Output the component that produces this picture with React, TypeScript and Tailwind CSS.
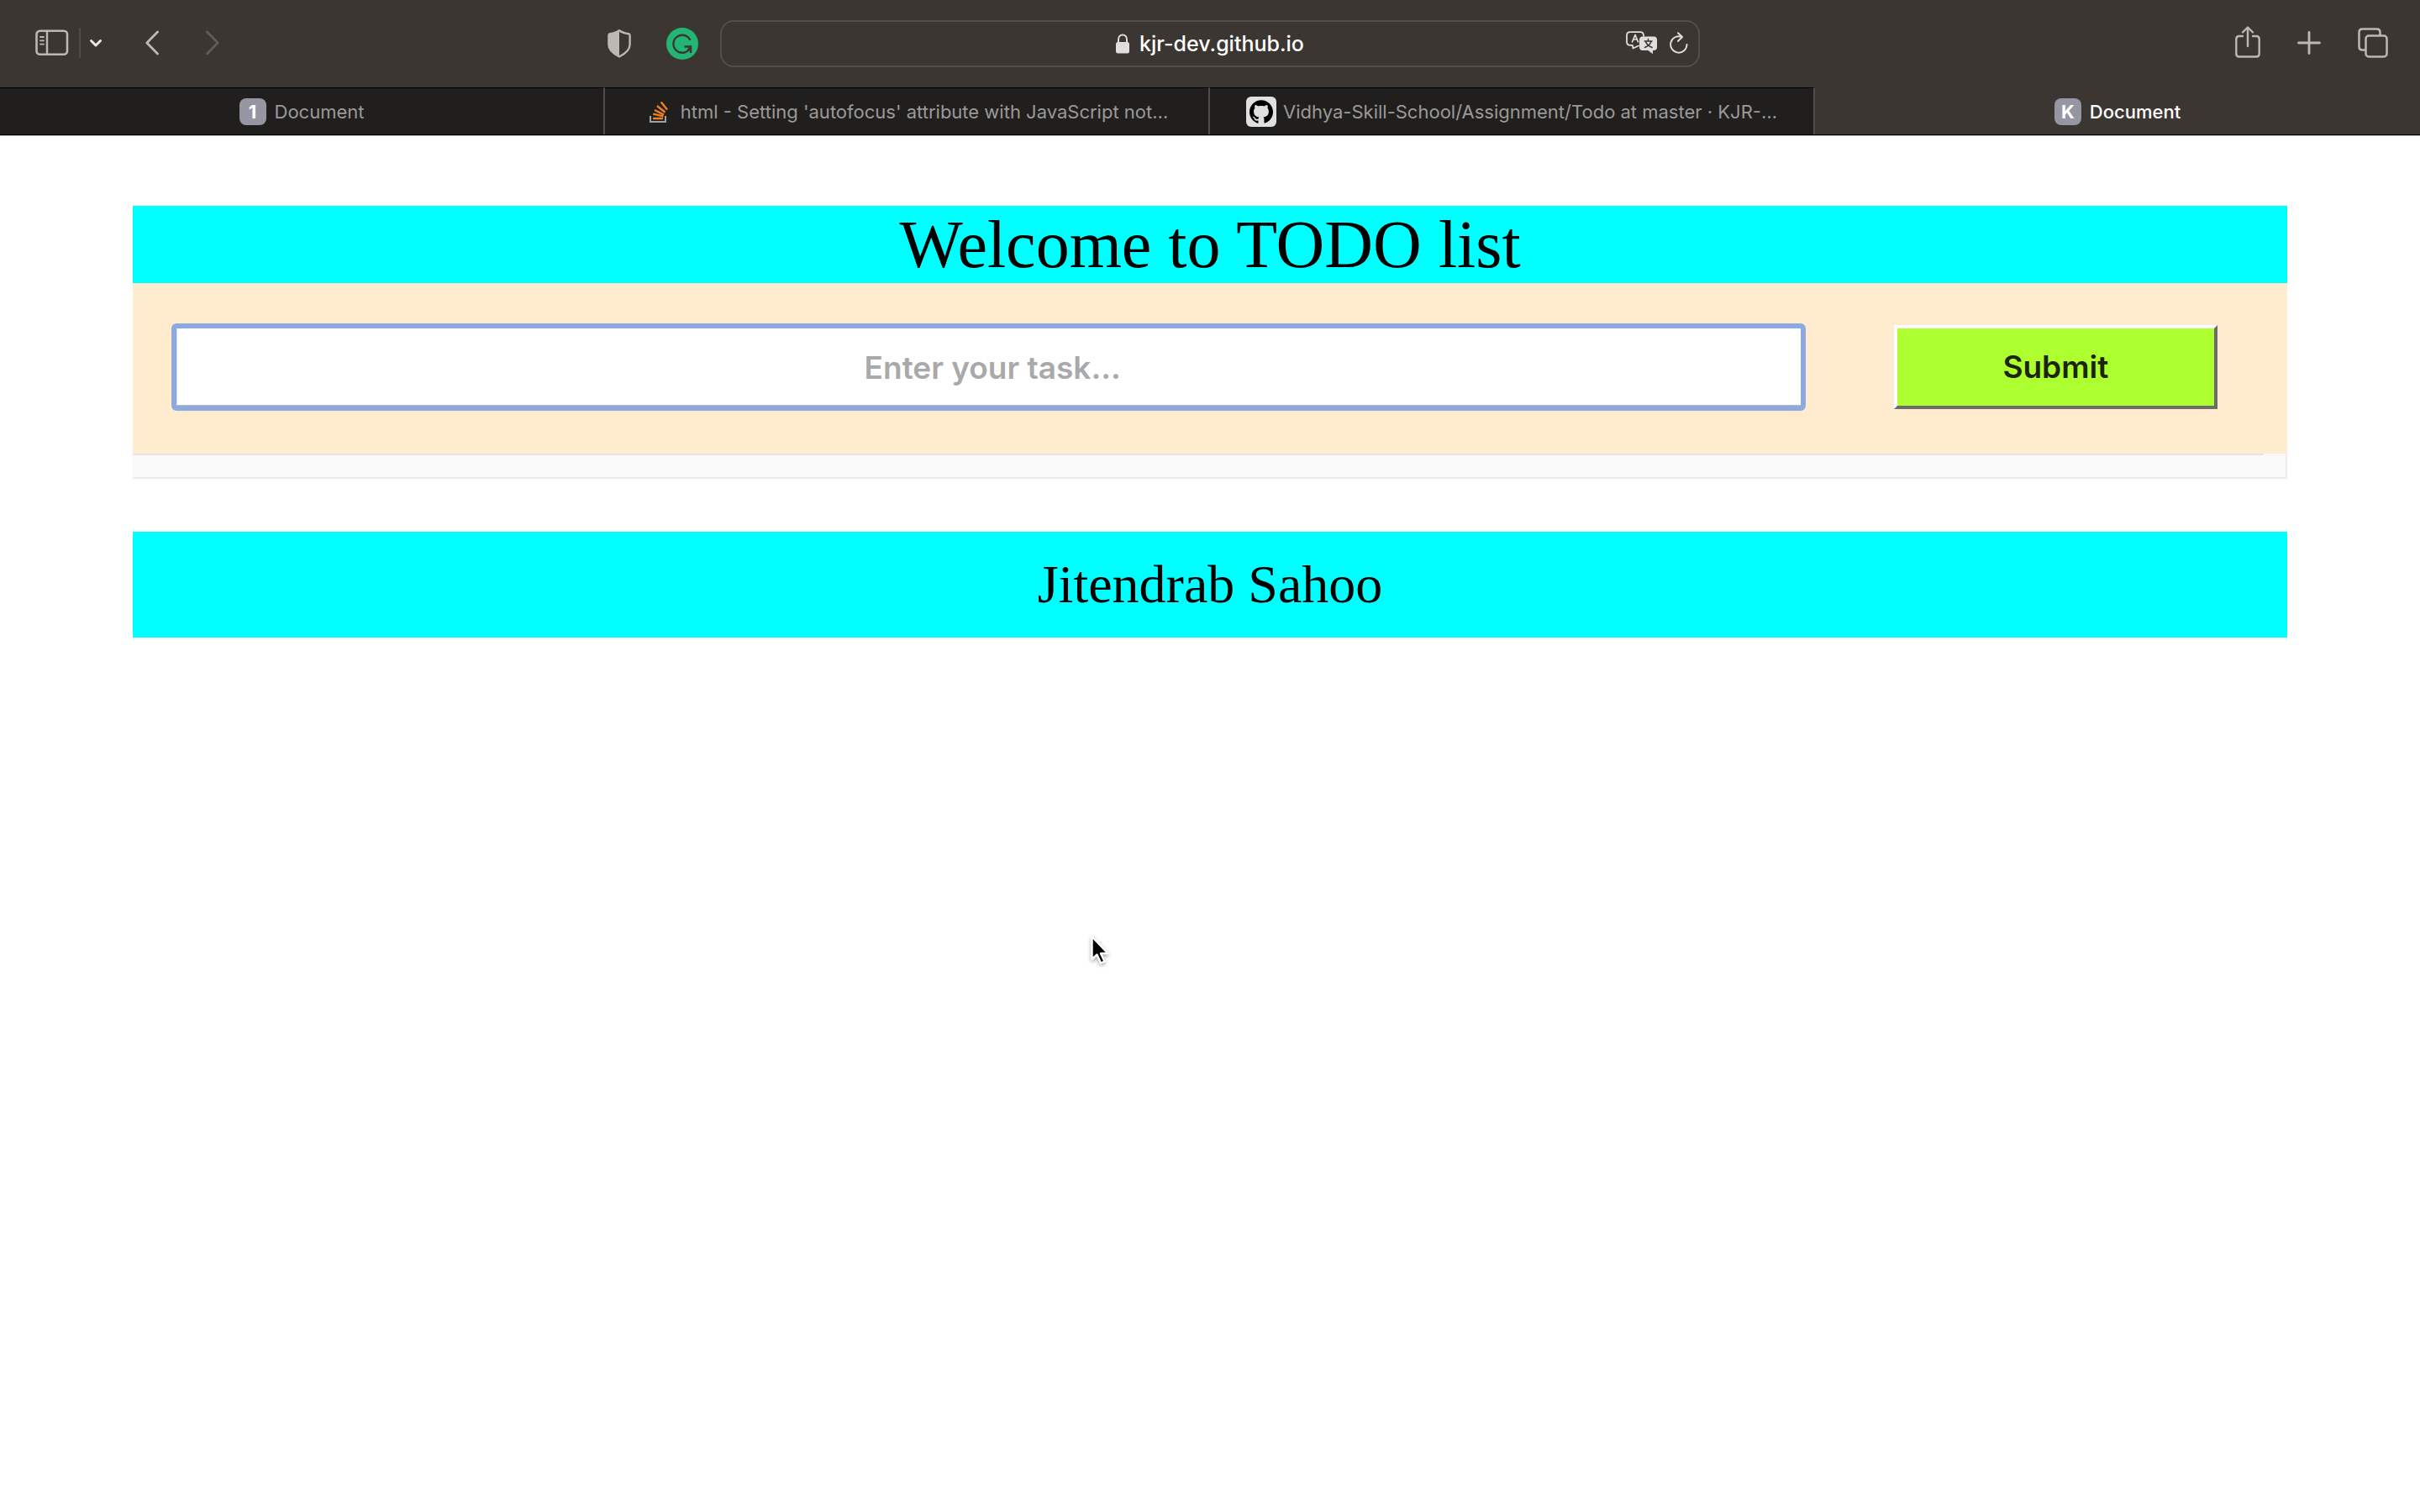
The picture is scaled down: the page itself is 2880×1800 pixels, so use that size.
import { useState } from "react";
import type { ReactNode } from "react";
import { SiGithub } from "react-icons/si";

function SidebarIcon() {
  return (
    <svg width="40" height="32" viewBox="0 0 40 32" fill="none" stroke="#bdb8b5" strokeLinecap="round">
      <rect x="1.500" y="1.800" width="36.500" height="28" rx="4" strokeWidth="2.600" />
      <path d="M14 2v28" strokeWidth="2.400" />
      <path d="M6 9h4M6 13.300h4M6 17.600h4" strokeWidth="1.800" />
    </svg>
  );
}

function ShieldIcon() {
  return (
    <svg width="28" height="34" viewBox="0 0 28 34" fill="none">
      <path
        d="M14 1.300C17 3.600 21.500 4.800 25 5.300Q26.600 5.600 26.600 7.200V18C26.600 25 20 29.500 14 32.500C8 29.500 1.400 25 1.400 18V7.200Q1.400 5.600 3 5.300C6.500 4.800 11 3.600 14 1.300Z"
        stroke="#bdb8b5"
        strokeWidth="2.400"
        strokeLinejoin="round"
      />
      <path d="M14 1.300C11 3.600 6.500 4.800 3 5.300Q1.400 5.600 1.400 7.200V18C1.400 25 8 29.500 14 32.500Z" fill="#bdb8b5" />
    </svg>
  );
}

function GrammarIcon() {
  return (
    <svg width="38" height="38" viewBox="0 0 38 38" fill="none">
      <circle cx="19" cy="19" r="19" fill="#23b574" />
      <path d="M28 14A10.500 10.500 0 1 0 27 26" stroke="#3c3633" strokeWidth="2.400" strokeLinecap="round" />
      <path d="M21.500 22.500H29V30" stroke="#3c3633" strokeWidth="2.600" />
      <path d="M28.500 23L25.500 27" stroke="#3c3633" strokeWidth="2.400" />
    </svg>
  );
}

function LockIcon() {
  return (
    <svg width="16" height="24" viewBox="0 0 16 24" fill="none">
      <path d="M3 11V7C3 3.500 5.200 1.500 8 1.500S13 3.500 13 7V11" stroke="#dfdedd" strokeWidth="2" />
      <rect x="0" y="10" width="16" height="13.500" rx="2.500" fill="#dfdedd" />
    </svg>
  );
}

function TranslateIcon() {
  return (
    <svg width="38" height="28" viewBox="0 0 38 28" fill="none" strokeLinecap="round" strokeLinejoin="round">
      <path
        d="M15 17.500L8.500 20.500L7.800 16.800H5Q1 16.800 1 12.800V5Q1 1.200 5 1.200H17Q21 1.200 21 5V6"
        stroke="#dfdedd"
        strokeWidth="1.800"
      />
      <path d="M7.500 12.800L11 4.500L14.500 12.800M8.800 10H13.200" stroke="#dfdedd" strokeWidth="1.700" />
      <rect x="16" y="6.500" width="21" height="16.500" rx="4" fill="#dfdedd" />
      <path d="M25 22L32 27.300V22Z" fill="#dfdedd" />
      <path
        d="M26.500 9.500V11.500M22.200 12H31M30 12.500C29 15.500 26 18 22.500 19.500M23.500 12.500C24.500 15.500 27 18 31 19.500"
        stroke="#3c3633"
        strokeWidth="1.500"
      />
    </svg>
  );
}

function ReloadIcon() {
  return (
    <svg width="22" height="26" viewBox="0 0 22 26" fill="none" stroke="#dfdedd" strokeWidth="1.900" strokeLinecap="round" strokeLinejoin="round">
      <path d="M20.500 15A9.700 9.700 0 1 1 14.500 6" />
      <path d="M10 1.200L15 6L10 11" />
    </svg>
  );
}

function StackIcon() {
  return (
    <svg width="32" height="32" viewBox="0 0 32 32" fill="none">
      <path d="M6 21V28H24V21" stroke="#9aa2aa" strokeWidth="2" />
      <path
        d="M9 24H21M9.300 18.700L21.500 21.400M11 14L22 19.500M14 9L23.500 16.800M18.700 4.500L26 13.500"
        stroke="#f0801f"
        strokeWidth="2.400"
      />
    </svg>
  );
}

function LetterBadge({ letter }: { letter: string }) {
  return (
    <span className="flex size-8 shrink-0 items-center justify-center rounded-lg bg-[#9696a3] text-[22px] font-bold text-white">
      {letter}
    </span>
  );
}

function GithubBadge() {
  return (
    <span className="flex size-9 shrink-0 items-center justify-center rounded-md bg-[#e0e0e0]">
      <SiGithub className="size-7 text-black" />
    </span>
  );
}

type Tab = { title: string; icon: ReactNode; gap: string };

const tabs: Tab[] = [
  { title: "Document", icon: <LetterBadge letter="1" />, gap: "gap-2.5" },
  { title: "html - Setting 'autofocus' attribute with JavaScript not…", icon: <StackIcon />, gap: "gap-2.5" },
  { title: "Vidhya-Skill-School/Assignment/Todo at master · KJR-…", icon: <GithubBadge />, gap: "gap-2" },
  { title: "Document", icon: <LetterBadge letter="K" />, gap: "gap-2.5" },
];

function Toolbar() {
  return (
    <div className="grid h-[104px] grid-cols-[1fr_40.5%_1fr] items-center">
      <div className="flex items-center justify-between pr-[26px] pl-[42px]">
        <div className="flex items-center pb-[3px]">
          <button type="button" aria-label="Show sidebar">
            <SidebarIcon />
          </button>
          <span className="ml-3 h-9 w-0.5 bg-[#514b48]" />
          <button type="button" aria-label="Tab groups" className="ml-2.5">
            <svg width="16" height="12" viewBox="0 0 16 12" fill="none" stroke="#ebe8e6" strokeWidth="3" strokeLinecap="round" strokeLinejoin="round">
              <path d="M2.500 3.500L8 9L13.500 3.500" />
            </svg>
          </button>
          <button type="button" aria-label="Back" className="ml-[51px]">
            <svg width="16" height="30" viewBox="0 0 16 30" fill="none" stroke="#bdb8b5" strokeWidth="2.800" strokeLinecap="round" strokeLinejoin="round">
              <path d="M14.500 2L1.800 15L14.500 28" />
            </svg>
          </button>
          <button type="button" aria-label="Forward" className="ml-14">
            <svg width="16" height="30" viewBox="0 0 16 30" fill="none" stroke="#625d5a" strokeWidth="2.800" strokeLinecap="round" strokeLinejoin="round">
              <path d="M1.500 2L14.200 15L1.500 28" />
            </svg>
          </button>
        </div>
        <div className="flex items-center gap-[42px]">
          <button type="button" aria-label="Privacy report">
            <ShieldIcon />
          </button>
          <button type="button" aria-label="Grammar check">
            <GrammarIcon />
          </button>
        </div>
      </div>

      <div className="flex h-14 items-center rounded-2xl border-2 border-[#534e4b] px-3">
        <div className="flex-1" />
        <a href="#top" className="flex items-center gap-3 text-[25px] leading-8 font-medium text-white">
          <LockIcon />
          kjr-dev.github.io
        </a>
        <div className="flex flex-1 items-center justify-end gap-[14px] pb-[3px]">
          <button type="button" aria-label="Translate page">
            <TranslateIcon />
          </button>
          <button type="button" aria-label="Reload page">
            <ReloadIcon />
          </button>
        </div>
      </div>

      <div className="flex items-center justify-end pr-[38px] pb-[3px]">
        <button type="button" aria-label="Share">
          <svg width="30" height="40" viewBox="0 0 30 40" fill="none" stroke="#bdb8b5" strokeWidth="2.400" strokeLinecap="round" strokeLinejoin="round">
            <path d="M9 12H5Q1.300 12 1.300 15.500V33Q1.300 36.500 5 36.500H25Q28.700 36.500 28.700 33V15.500Q28.700 12 25 12H21" />
            <path d="M15 24V2.500M9 7.500L15 1.500L21 7.500" />
          </svg>
        </button>
        <button type="button" aria-label="New tab" className="ml-11">
          <svg width="28" height="28" viewBox="0 0 28 28" fill="none" stroke="#bdb8b5" strokeWidth="2.800" strokeLinecap="round">
            <path d="M14 1.500V26.500M1.500 14H26.500" />
          </svg>
        </button>
        <button type="button" aria-label="Tab overview" className="ml-11">
          <svg width="36" height="36" viewBox="0 0 36 36" fill="none" stroke="#bdb8b5" strokeWidth="2.500" strokeLinejoin="round">
            <rect x="9.500" y="9.500" width="25" height="25" rx="3.500" />
            <path d="M9 26.500H5.500Q1.500 26.500 1.500 22.500V5.500Q1.500 1.500 5.500 1.500H22.500Q26.500 1.500 26.500 5.500V9" />
          </svg>
        </button>
      </div>
    </div>
  );
}

function TabBar() {
  return (
    <div role="tablist" className="grid h-[56px] grid-cols-4">
      {tabs.map((tab, i) => {
        const active = i === tabs.length - 1;
        return (
          <button
            key={i}
            type="button"
            role="tab"
            aria-selected={active}
            className={
              "flex min-w-0 items-center justify-center border-t text-[22px] leading-7 whitespace-nowrap " +
              tab.gap +
              (active
                ? " border-t-transparent font-medium text-white"
                : " border-r-2 border-t-black border-r-[#534b4a] bg-[#201f1d] text-[#9b9a98]")
            }
          >
            {tab.icon}
            {tab.title}
          </button>
        );
      })}
    </div>
  );
}

function Pointer() {
  return (
    <svg
      aria-hidden="true"
      className="pointer-events-none absolute top-[1111px] left-[1295px] drop-shadow-[0_2px_2px_rgba(0,0,0,0.35)]"
      width="30"
      height="42"
      viewBox="0 0 30 42"
    >
      <path
        d="M4.500 4V31L10.500 25.500L15 35.500L19.500 33.500L15 24H23.500Z"
        fill="#000"
        stroke="#fff"
        strokeWidth="2.400"
        strokeLinejoin="round"
      />
    </svg>
  );
}

export default function App() {
  const [task, setTask] = useState("");
  return (
    <div id="top" className="relative min-h-screen bg-white font-['Inter',sans-serif]">
      <header className="border-b border-[#b5b3b2] bg-[#3c3633]">
        <Toolbar />
        <TabBar />
        <div className="h-px bg-black" />
      </header>

      <main className="mx-[5.5%] pt-[83px]">
        <h1 className="bg-[#00ffff] text-center font-['Liberation_Serif',serif] text-[80px] leading-[92px] text-black">
          Welcome to TODO list
        </h1>

        <form
          onSubmit={(e) => e.preventDefault()}
          className="flex items-center gap-[105px] bg-[#ffebcd] pt-12 pr-[83px] pb-[51px] pl-[46px]"
        >
          <div className="h-[104px] min-w-0 flex-1 rounded-md border-6 border-[#8da9e2] bg-white">
            <input
              type="text"
              aria-label="Task"
              placeholder="Enter your task..."
              value={task}
              onChange={(e) => setTask(e.target.value)}
              className="size-full border-b border-l border-b-[#b8b8b8] border-l-[#dddddd] pt-0.5 pl-2 text-center text-[37px] leading-[48px] font-semibold text-black outline-none placeholder:text-[#a9a9a9]"
            />
          </div>
          <button
            type="submit"
            className="h-[100px] w-[15.8%] border-4 border-t-white border-r-[#6b6b6b] border-b-[#6b6b6b] border-l-white bg-[#adff2f] text-[37px] leading-[48px] font-semibold text-[#1a2607]"
          >
            Submit
          </button>
        </form>

        <ul className="border-r-2 border-b-2 border-[#ebebeb] bg-[#f9f9f9] pr-[26px]">
          <li className="h-7 border-t-2 border-[#e6e6e6]" />
        </ul>

        <footer className="mt-[63px] bg-[#00ffff] py-[26px] text-center font-['Liberation_Serif',serif] text-[64px] leading-[74px] text-black">
          Jitendrab Sahoo
        </footer>
      </main>

      <Pointer />
    </div>
  );
}
